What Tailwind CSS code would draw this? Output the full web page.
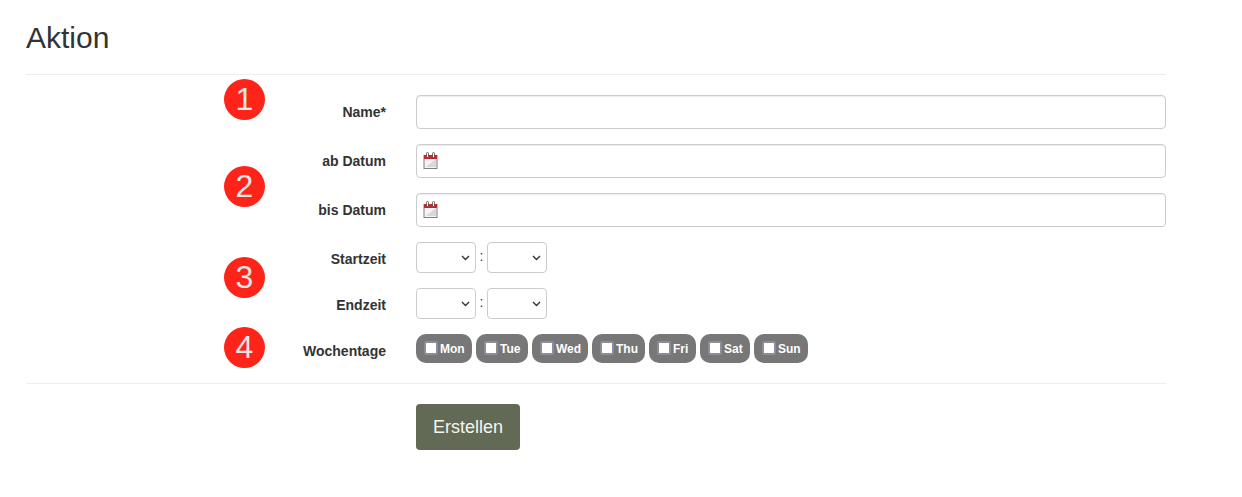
<!DOCTYPE html>
<html lang="de">
<head>
<meta charset="utf-8">
<title>Aktion</title>
<script src="https://cdn.jsdelivr.net/npm/@tailwindcss/browser@4"></script>
</head>
<body class="bg-white font-['Liberation_Sans',Arial,sans-serif] text-[#333] overflow-hidden">
<div class="relative w-[1242px] h-[497px]">
  <div class="w-[1140px] ml-[26px]">
    <h1 class="text-[30px] leading-[33px] pt-[21px] pb-5 border-b border-[#eee]">Aktion</h1>

    <form class="pt-5">
      <div class="grid grid-cols-[360px_1fr] gap-x-[30px] items-start">
        <label class="text-sm font-bold text-right h-[34px] leading-[34px]">Name*</label>
        <input type="text" class="h-[34px] border border-[#ccc] rounded bg-white shadow-[inset_0_1px_1px_rgba(0,0,0,0.075)]">

        <label class="mt-[15px] text-sm font-bold text-right h-[34px] leading-[34px]">ab Datum</label>
        <div class="mt-[15px] h-[34px] border border-[#ccc] rounded bg-white shadow-[inset_0_1px_1px_rgba(0,0,0,0.075)] flex items-center pl-[6px]">
          <svg class="mb-[2px]" width="15" height="17" viewBox="0 0 15 17">
            <rect x="1" y="3.5" width="13" height="13" fill="#f4f4f4" stroke="#808080"/>
            <path d="M3 15 L13 7 V15 Z" fill="#d8d8d8"/>
            <rect x="1" y="3" width="13" height="4" fill="#c4262e"/>
            <rect x="3.5" y="0.5" width="2" height="5" rx="1" fill="#fff" stroke="#5a3a3a" stroke-width="0.8"/>
            <rect x="9.5" y="0.5" width="2" height="5" rx="1" fill="#fff" stroke="#5a3a3a" stroke-width="0.8"/>
          </svg>
        </div>

        <label class="mt-[15px] text-sm font-bold text-right h-[34px] leading-[34px]">bis Datum</label>
        <div class="mt-[15px] h-[34px] border border-[#ccc] rounded bg-white shadow-[inset_0_1px_1px_rgba(0,0,0,0.075)] flex items-center pl-[6px]">
          <svg class="mb-[2px]" width="15" height="17" viewBox="0 0 15 17">
            <rect x="1" y="3.5" width="13" height="13" fill="#f4f4f4" stroke="#808080"/>
            <path d="M3 15 L13 7 V15 Z" fill="#d8d8d8"/>
            <rect x="1" y="3" width="13" height="4" fill="#c4262e"/>
            <rect x="3.5" y="0.5" width="2" height="5" rx="1" fill="#fff" stroke="#5a3a3a" stroke-width="0.8"/>
            <rect x="9.5" y="0.5" width="2" height="5" rx="1" fill="#fff" stroke="#5a3a3a" stroke-width="0.8"/>
          </svg>
        </div>

        <label class="mt-[15px] text-sm font-bold text-right h-[31px] leading-[35px]">Startzeit</label>
        <div class="mt-[15px] flex items-start h-[31px]">
          <div class="relative w-[60px] h-[31px]">
            <select class="appearance-none w-full h-full border border-[#ccc] rounded bg-white text-sm"><option></option></select>
            <svg class="absolute right-[6px] top-[13px] pointer-events-none" width="9" height="6" viewBox="0 0 9 6"><path d="M1 1 L4.5 4.5 L8 1" fill="none" stroke="#333" stroke-width="1.4"/></svg>
          </div>
          <span class="w-[11px] text-center text-sm leading-[28px]">:</span>
          <div class="relative w-[60px] h-[31px]">
            <select class="appearance-none w-full h-full border border-[#ccc] rounded bg-white text-sm"><option></option></select>
            <svg class="absolute right-[6px] top-[13px] pointer-events-none" width="9" height="6" viewBox="0 0 9 6"><path d="M1 1 L4.5 4.5 L8 1" fill="none" stroke="#333" stroke-width="1.4"/></svg>
          </div>
        </div>

        <label class="mt-[15px] text-sm font-bold text-right h-[31px] leading-[35px]">Endzeit</label>
        <div class="mt-[15px] flex items-start h-[31px]">
          <div class="relative w-[60px] h-[31px]">
            <select class="appearance-none w-full h-full border border-[#ccc] rounded bg-white text-sm"><option></option></select>
            <svg class="absolute right-[6px] top-[13px] pointer-events-none" width="9" height="6" viewBox="0 0 9 6"><path d="M1 1 L4.5 4.5 L8 1" fill="none" stroke="#333" stroke-width="1.4"/></svg>
          </div>
          <span class="w-[11px] text-center text-sm leading-[28px]">:</span>
          <div class="relative w-[60px] h-[31px]">
            <select class="appearance-none w-full h-full border border-[#ccc] rounded bg-white text-sm"><option></option></select>
            <svg class="absolute right-[6px] top-[13px] pointer-events-none" width="9" height="6" viewBox="0 0 9 6"><path d="M1 1 L4.5 4.5 L8 1" fill="none" stroke="#333" stroke-width="1.4"/></svg>
          </div>
        </div>

        <label class="mt-[15px] text-sm font-bold text-right h-[29px] leading-[35px]">Wochentage</label>
        <div class="mt-[15px] flex gap-1 h-[29px]">
          <label class="flex items-center gap-[2px] w-[56px] h-[29px] pl-2 rounded-[10px] bg-[#777] text-white text-xs font-bold"><input type="checkbox" class="appearance-none shrink-0 w-[14px] h-[14px] mb-[1px] bg-white border-2 border-[#8f8c99] rounded-[2px]">Mon</label>
          <label class="flex items-center gap-[2px] w-[52px] h-[29px] pl-2 rounded-[10px] bg-[#777] text-white text-xs font-bold"><input type="checkbox" class="appearance-none shrink-0 w-[14px] h-[14px] mb-[1px] bg-white border-2 border-[#8f8c99] rounded-[2px]">Tue</label>
          <label class="flex items-center gap-[2px] w-[56px] h-[29px] pl-2 rounded-[10px] bg-[#777] text-white text-xs font-bold"><input type="checkbox" class="appearance-none shrink-0 w-[14px] h-[14px] mb-[1px] bg-white border-2 border-[#8f8c99] rounded-[2px]">Wed</label>
          <label class="flex items-center gap-[2px] w-[53px] h-[29px] pl-2 rounded-[10px] bg-[#777] text-white text-xs font-bold"><input type="checkbox" class="appearance-none shrink-0 w-[14px] h-[14px] mb-[1px] bg-white border-2 border-[#8f8c99] rounded-[2px]">Thu</label>
          <label class="flex items-center gap-[2px] w-[47px] h-[29px] pl-2 rounded-[10px] bg-[#777] text-white text-xs font-bold"><input type="checkbox" class="appearance-none shrink-0 w-[14px] h-[14px] mb-[1px] bg-white border-2 border-[#8f8c99] rounded-[2px]">Fri</label>
          <label class="flex items-center gap-[2px] w-[50px] h-[29px] pl-2 rounded-[10px] bg-[#777] text-white text-xs font-bold"><input type="checkbox" class="appearance-none shrink-0 w-[14px] h-[14px] mb-[1px] bg-white border-2 border-[#8f8c99] rounded-[2px]">Sat</label>
          <label class="flex items-center gap-[2px] w-[54px] h-[29px] pl-2 rounded-[10px] bg-[#777] text-white text-xs font-bold"><input type="checkbox" class="appearance-none shrink-0 w-[14px] h-[14px] mb-[1px] bg-white border-2 border-[#8f8c99] rounded-[2px]">Sun</label>
        </div>
      </div>

      <div class="mt-5 border-t border-[#eee] pt-5 pl-[390px]">
        <button type="button" class="w-[104px] h-[46px] rounded bg-[#626954] text-[#f5f5f0] text-lg">Erstellen</button>
      </div>
    </form>
  </div>

  <!-- numbered markers lying over the form -->
  <div class="absolute left-[224px] top-[79px] w-[41px] h-[41px] rounded-full bg-[#ff2419] text-[#e6e6e6] text-[32px] leading-[41px] text-center">1</div>
  <div class="absolute left-[224px] top-[166px] w-[41px] h-[41px] rounded-full bg-[#ff2419] text-[#e6e6e6] text-[32px] leading-[41px] text-center">2</div>
  <div class="absolute left-[224px] top-[257px] w-[41px] h-[41px] rounded-full bg-[#ff2419] text-[#e6e6e6] text-[32px] leading-[41px] text-center">3</div>
  <div class="absolute left-[224px] top-[327px] w-[41px] h-[41px] rounded-full bg-[#ff2419] text-[#e6e6e6] text-[32px] leading-[41px] text-center">4</div>
</div>
</body>
</html>
